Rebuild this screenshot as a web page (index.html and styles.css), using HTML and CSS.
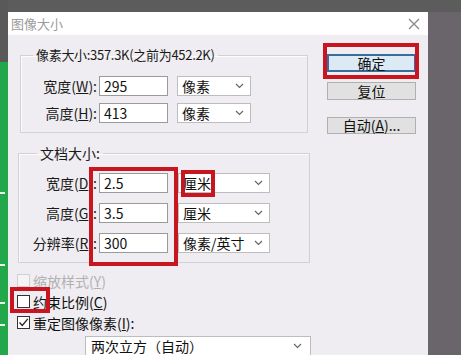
FILE: index.html
```html
<!DOCTYPE html>
<html lang="zh-CN">
<head>
  <meta charset="UTF-8" />
  <meta name="viewport" content="width=device-width, initial-scale=1.0"/>
  <title>图像大小</title>
  <link rel="stylesheet" href="styles.css">
</head>
<body>
  <div class="strip"><i></i><i></i><i></i><i></i></div>

  <div class="dialog">
    <div class="titlebar">
      <span class="title">图像大小</span>
      <svg class="close" width="12" height="12" viewBox="0 0 12 12"><path d="M1 1L11 11M11 1L1 11" stroke="#8a8a8a" stroke-width="1.3" fill="none"/></svg>
    </div>

    <div class="content">
      <div class="left">
        <fieldset class="group group-pixel">
          <legend class="size-info">像素大小:357.3K(之前为452.2K)</legend>
          <div class="row">
            <label>宽度(<u>W</u>):</label>
            <div class="field">295</div>
            <div class="select">像素<svg width="9" height="6" viewBox="0 0 9 6"><path d="M1 1L4.5 4.5L8 1" stroke="#666" stroke-width="1.2" fill="none"/></svg></div>
          </div>
          <div class="row">
            <label>高度(<u>H</u>):</label>
            <div class="field">413</div>
            <div class="select">像素<svg width="9" height="6" viewBox="0 0 9 6"><path d="M1 1L4.5 4.5L8 1" stroke="#666" stroke-width="1.2" fill="none"/></svg></div>
          </div>
        </fieldset>

        <fieldset class="group group-doc">
          <legend>文档大小:</legend>
          <div class="row">
            <label>宽度(<u>D</u>):</label>
            <div class="field">2.5</div>
            <div class="select">厘米<svg width="9" height="6" viewBox="0 0 9 6"><path d="M1 1L4.5 4.5L8 1" stroke="#666" stroke-width="1.2" fill="none"/></svg></div>
          </div>
          <div class="row">
            <label>高度(<u>G</u>):</label>
            <div class="field">3.5</div>
            <div class="select">厘米<svg width="9" height="6" viewBox="0 0 9 6"><path d="M1 1L4.5 4.5L8 1" stroke="#666" stroke-width="1.2" fill="none"/></svg></div>
          </div>
          <div class="row">
            <label>分辨率(<u>R</u>):</label>
            <div class="field">300</div>
            <div class="select">像素/英寸<svg width="9" height="6" viewBox="0 0 9 6"><path d="M1 1L4.5 4.5L8 1" stroke="#666" stroke-width="1.2" fill="none"/></svg></div>
          </div>
        </fieldset>

        <div class="check disabled"><span class="box"></span>缩放样式(<u>Y</u>)</div>
        <div class="check"><span class="box"></span>约束比例(<u>C</u>)</div>
        <div class="check"><span class="box"><svg width="11" height="11" viewBox="0 0 11 11"><path d="M1.5 5.5L4.3 8.5L9.8 1.8" stroke="#222" stroke-width="1.3" fill="none"/></svg></span>重定图像像素(<u>I</u>):</div>
        <div class="select wide">两次立方（自动）<svg width="9" height="6" viewBox="0 0 9 6"><path d="M1 1L4.5 4.5L8 1" stroke="#666" stroke-width="1.2" fill="none"/></svg></div>
      </div>

      <div class="right">
        <div class="btn primary">确定</div>
        <div class="btn">复位</div>
        <div class="btn auto">自动(<u>A</u>)...</div>
      </div>
    </div>

    <!-- 红色标注框 -->
    <div class="mark mark-ok"></div>
    <div class="mark mark-fields"></div>
    <div class="mark mark-unit"></div>
    <div class="mark mark-check"></div>
  </div>
</body>
</html>
```

FILE: styles.css
```css
body { margin: 0; width: 461px; height: 355px; overflow: hidden; display: flex; align-items: flex-start; background: linear-gradient(#5c5c5c 12px, #6a656a 12px); font-family: "Noto Sans CJK SC", "Noto Sans", sans-serif; font-size: 14px; color: #111;}

.strip { width: 8px; height: 355px; flex: none; display: flex; flex-direction: column; padding-top: 62px; box-sizing: border-box; background: linear-gradient(#595959 62px, #22a84b 62px);}
.strip i { display: block; width: 5px; height: 2px; background: #e8f5ec; margin-top: 60px;}
.strip i:first-child { margin-top: 130px;}
.strip i:nth-child(2) { margin-top: 70px;}
.strip i:nth-child(3) { margin-top: 36px;}
.strip i:nth-child(4) { margin-top: 20px;}

.dialog { position: relative; width: 420px; height: 343px; margin-top: 12px; flex: none; background: #efedf1; overflow: hidden;}

.titlebar { height: 23px; background: #fff; display: flex; align-items: center; justify-content: space-between; padding: 0 8px 0 3px;}
.title { font-size: 13px; color: #9c9c9c;}
.close { margin-top: 1px;}

.content { display: flex; padding-top: 10px;}
.left { width: 303px; flex: none;}
.right { margin-left: 16px; width: 89px; display: flex; flex-direction: column;}

.group { margin: 0; border: 1px solid #d2d0d4; box-shadow: inset 1px 1px 0 #fbfbfb; padding: 11px 0 9px 0;}
.group legend { padding: 0 3px; line-height: 20px; font-size: 14px; color: #1a1a1a;}
.group legend.size-info { font-size: 13px; letter-spacing: -0.3px;}
.group-pixel { margin-left: 12px; width: 288px; box-sizing: border-box;}
.group-pixel legend { margin-left: 12px;}
.group-pixel .row + .row { margin-top: 7px;}
.group-pixel label { width: 76px;}
.group-pixel .select { margin-left: 9px; width: 74px;}

.group-doc { margin: 10px 0 0 10px; width: 292px; box-sizing: border-box; padding-top: 10px;}
.group-doc legend { margin-left: 18px;}
.group-doc .row + .row { margin-top: 10px;}
.group-doc label { width: 78px;}
.group-doc .select { margin-left: 10px; width: 92px;}

.row { display: flex; align-items: center; height: 20px;}
.row label { text-align: right; white-space: nowrap; color: #1a1a1a;}
.field { margin-left: 2px; width: 69px; height: 20px; box-sizing: border-box; border: 1px solid #9a9a9a; background: #fff; padding-left: 4px; line-height: 18px;}

.select { height: 20px; box-sizing: border-box; border: 1px solid #bdbdbd; background: #fff; padding: 0 6px 0 4px; line-height: 18px; display: flex; align-items: center; justify-content: space-between; white-space: nowrap;}
.select svg { flex: none;}
.select.wide { margin: 3px 0 0 77px; width: 226px; padding-left: 5px; padding-right: 8px;}

.check { display: flex; align-items: center; height: 21px; margin-left: 9px; white-space: nowrap;}
.check:first-of-type { margin-top: 7px;}
.check .box { width: 13px; height: 13px; box-sizing: border-box; border: 1px solid #333; background: #fff; margin-right: 3px; display: flex; align-items: center; justify-content: center;}
.check.disabled { color: #b1b1b1;}
.check.disabled .box { border-color: #d0d0d0; background: #f4f4f4;}

.btn { height: 18px; box-sizing: border-box; border: 1px solid #b0b0b0; background: #e1e1e1; text-align: center; line-height: 16px; font-size: 14px; color: #111;}
.btn.primary { margin-top: 9px; border: 2px solid #3a6d9c; background: #dceaf6; line-height: 14px;}
.btn + .btn { margin-top: 10px;}
.btn.auto { margin-top: 17px; height: 17px; line-height: 15px;}

.mark { position: absolute; border: 4px solid #c7161f; box-sizing: border-box;}
.mark-ok { left: 315px; top: 31px; width: 96px; height: 36px;}
.mark-fields { left: 81px; top: 155px; width: 89px; height: 99px;}
.mark-unit { left: 173px; top: 158px; width: 34px; height: 27px;}
.mark-check { left: 2px; top: 275px; width: 40px; height: 26px;}
```
